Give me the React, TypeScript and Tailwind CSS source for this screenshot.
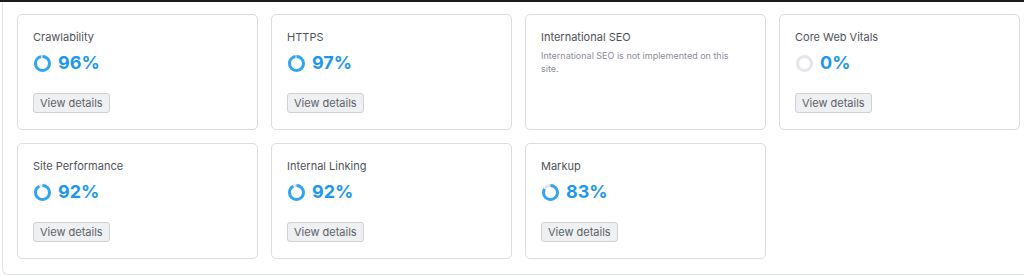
type Item = {
  title: string;
  score?: number;
  note?: string;
};

const items: Item[] = [
  { title: "Crawlability", score: 96 },
  { title: "HTTPS", score: 97 },
  { title: "International SEO", note: "International SEO is not implemented on this site." },
  { title: "Core Web Vitals", score: 0 },
  { title: "Site Performance", score: 92 },
  { title: "Internal Linking", score: 92 },
  { title: "Markup", score: 83 },
];

const Ring = ({ value }: { value: number }) => {
  const r = 7;
  const c = 2 * Math.PI * r;
  return (
    <svg width="19" height="19" viewBox="0 0 19 19" className="shrink-0">
      <circle cx="9.5" cy="9.5" r={r} fill="none" stroke="#e4e6eb" strokeWidth="3" />
      {value > 0 && (
        <circle
          cx="9.5"
          cy="9.5"
          r={r}
          fill="none"
          stroke="#2fa6f5"
          strokeWidth="3"
          strokeDasharray={`${(c * value) / 100} ${c}`}
          transform="rotate(-90 9.5 9.5)"
        />
      )}
    </svg>
  );
};

const Card = ({ item }: { item: Item }) => (
  <div className="h-[116px] rounded-[5px] border border-[#dcdde3] bg-white px-[15px] pt-[15px]">
    <div className="text-[11px] leading-[14px] text-[#4f525a]">{item.title}</div>
    {item.note ? (
      <p className="mt-[5px] w-[200px] text-[9px] leading-[13px] text-[#8b8e96]">{item.note}</p>
    ) : (
      <>
        <div className="mt-[9px] flex h-[20px] items-center gap-[6px]">
          <Ring value={item.score ?? 0} />
          <span className="text-[18px] font-bold leading-none text-[#1c97f0]">{item.score}%</span>
        </div>
        <button className="mt-[20px] h-[20px] rounded-[3px] border border-[#cfd1d6] bg-[#eef0f2] px-[6px] text-[11px] leading-none text-[#5d6068]">
          View details
        </button>
      </>
    )}
  </div>
);

export default function App() {
  return (
    <div className="h-[276px] w-[1024px] overflow-hidden bg-white font-['Inter',sans-serif]">
      <div className="h-[2px] bg-[#1b1b1b]" />
      <div className="ml-[2px] h-[273px] rounded-bl-[6px] border-b border-l border-[#e2e3e8] pl-[14px] pr-[4px] pt-[12px]">
        <div className="grid grid-cols-4 gap-[13px]">
          {items.map((item) => (
            <Card key={item.title} item={item} />
          ))}
        </div>
      </div>
    </div>
  );
}
